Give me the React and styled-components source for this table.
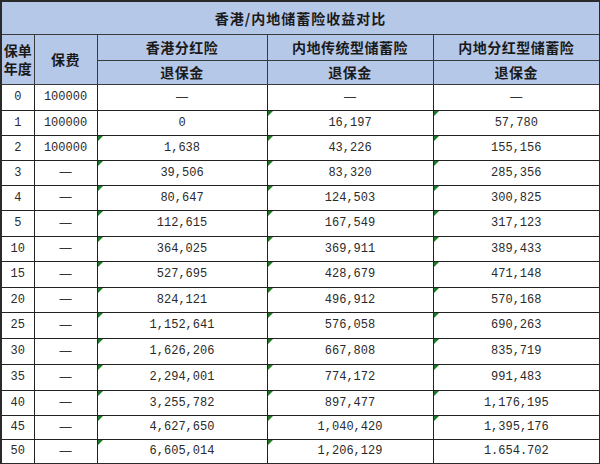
import React from "react";
import styled, { createGlobalStyle } from "styled-components";

const Global = createGlobalStyle`
  html, body { margin: 0; padding: 0; background: #ffffff; }
  body { width: 600px; height: 464px; overflow: hidden; }
`;

const Table = styled.table`
  border-collapse: collapse;
  table-layout: fixed;
  width: 599px;
  margin: 0;
  border: 2px solid #2a2a2a;
  font-family: "Noto Sans CJK SC", "Noto Sans", sans-serif;
  line-height: 14px;
  color: #1e1e1e;
`;

const HeadCell = styled.th`
  box-sizing: border-box;
  background: #b6c8e8;
  border: 1px solid #3a3a3a;
  font-weight: 700;
  font-size: 14px;
  line-height: ${(p) => (p.$tight ? "18px" : "16px")};
  padding: 0;
  text-align: center;
  vertical-align: middle;
  height: ${(p) => p.$h}px;
  letter-spacing: ${(p) => (p.$title ? "1px" : p.$tight ? "0" : "0.5px")};
  color: #1a1a1a;
`;

const Cell = styled.td`
  box-sizing: border-box;
  position: relative;
  border: 1px solid #222;
  padding: 0;
  height: ${(p) => p.$h}px;
  text-align: center;
  vertical-align: middle;
  font-family: "Liberation Mono", "DejaVu Sans Mono", monospace;
  font-size: 12px;
  line-height: 14px;
  color: #2a2a2a;
`;

const Dash = styled.span`
  font-family: "Liberation Sans", sans-serif;
  font-size: 12px;
  line-height: 14px;
  color: #333;
`;

const Flag = styled.span`
  position: absolute;
  left: 0;
  top: 0;
  width: 0;
  height: 0;
  border-top: 5px solid #1d7a24;
  border-right: 5px solid transparent;
`;

const rows = [
  ["0", "100000", null, null, null, [0, 0, 0], 26],
  ["1", "100000", "0", "16,197", "57,780", [0, 1, 1], 25],
  ["2", "100000", "1,638", "43,226", "155,156", [1, 1, 1], 25],
  ["3", "-", "39,506", "83,320", "285,356", [1, 1, 1], 25],
  ["4", "-", "80,647", "124,503", "300,825", [1, 1, 1], 25],
  ["5", "-", "112,615", "167,549", "317,123", [1, 1, 1], 26],
  ["10", "-", "364,025", "369,911", "389,433", [1, 1, 1], 25],
  ["15", "-", "527,695", "428,679", "471,148", [1, 1, 1], 26],
  ["20", "-", "824,121", "496,912", "570,168", [1, 1, 1], 25],
  ["25", "-", "1,152,641", "576,058", "690,263", [1, 1, 1], 26],
  ["30", "-", "1,626,206", "667,808", "835,719", [1, 1, 1], 26],
  ["35", "-", "2,294,001", "774,172", "991,483", [1, 1, 1], 26],
  ["40", "-", "3,255,782", "897,477", "1,176,195", [1, 1, 1], 25],
  ["45", "-", "4,627,650", "1,040,420", "1,395,176", [1, 1, 1], 24],
  ["50", "-", "6,605,014", "1,206,129", "1.654.702", [1, 1, 0], 25],
];

const show = (v) => (v === null || v === "-" ? <Dash>—</Dash> : v);

export default function App() {
  return (
    <>
      <Global />
      <Table>
        <colgroup>
          <col style={{ width: 33 }} />
          <col style={{ width: 63 }} />
          <col style={{ width: 170 }} />
          <col style={{ width: 166 }} />
          <col style={{ width: 167 }} />
        </colgroup>
        <thead>
          <tr>
            <HeadCell colSpan={5} $h={33} $title>
              香港/内地储蓄险收益对比
            </HeadCell>
          </tr>
          <tr>
            <HeadCell rowSpan={2} $h={26} $tight>
              保单
              <br />
              年度
            </HeadCell>
            <HeadCell rowSpan={2} $h={26}>
              保费
            </HeadCell>
            <HeadCell $h={26}>香港分红险</HeadCell>
            <HeadCell $h={26}>内地传统型储蓄险</HeadCell>
            <HeadCell $h={26}>内地分红型储蓄险</HeadCell>
          </tr>
          <tr>
            <HeadCell $h={24}>退保金</HeadCell>
            <HeadCell $h={24}>退保金</HeadCell>
            <HeadCell $h={24}>退保金</HeadCell>
          </tr>
        </thead>
        <tbody>
          {rows.map((r) => (
            <tr key={r[0]}>
              <Cell $h={r[6]}>{r[0]}</Cell>
              <Cell $h={r[6]}>{show(r[1])}</Cell>
              {[r[2], r[3], r[4]].map((v, i) => (
                <Cell key={i} $h={r[6]}>
                  {r[5][i] ? <Flag /> : null}
                  {show(v)}
                </Cell>
              ))}
            </tr>
          ))}
        </tbody>
      </Table>
    </>
  );
}
